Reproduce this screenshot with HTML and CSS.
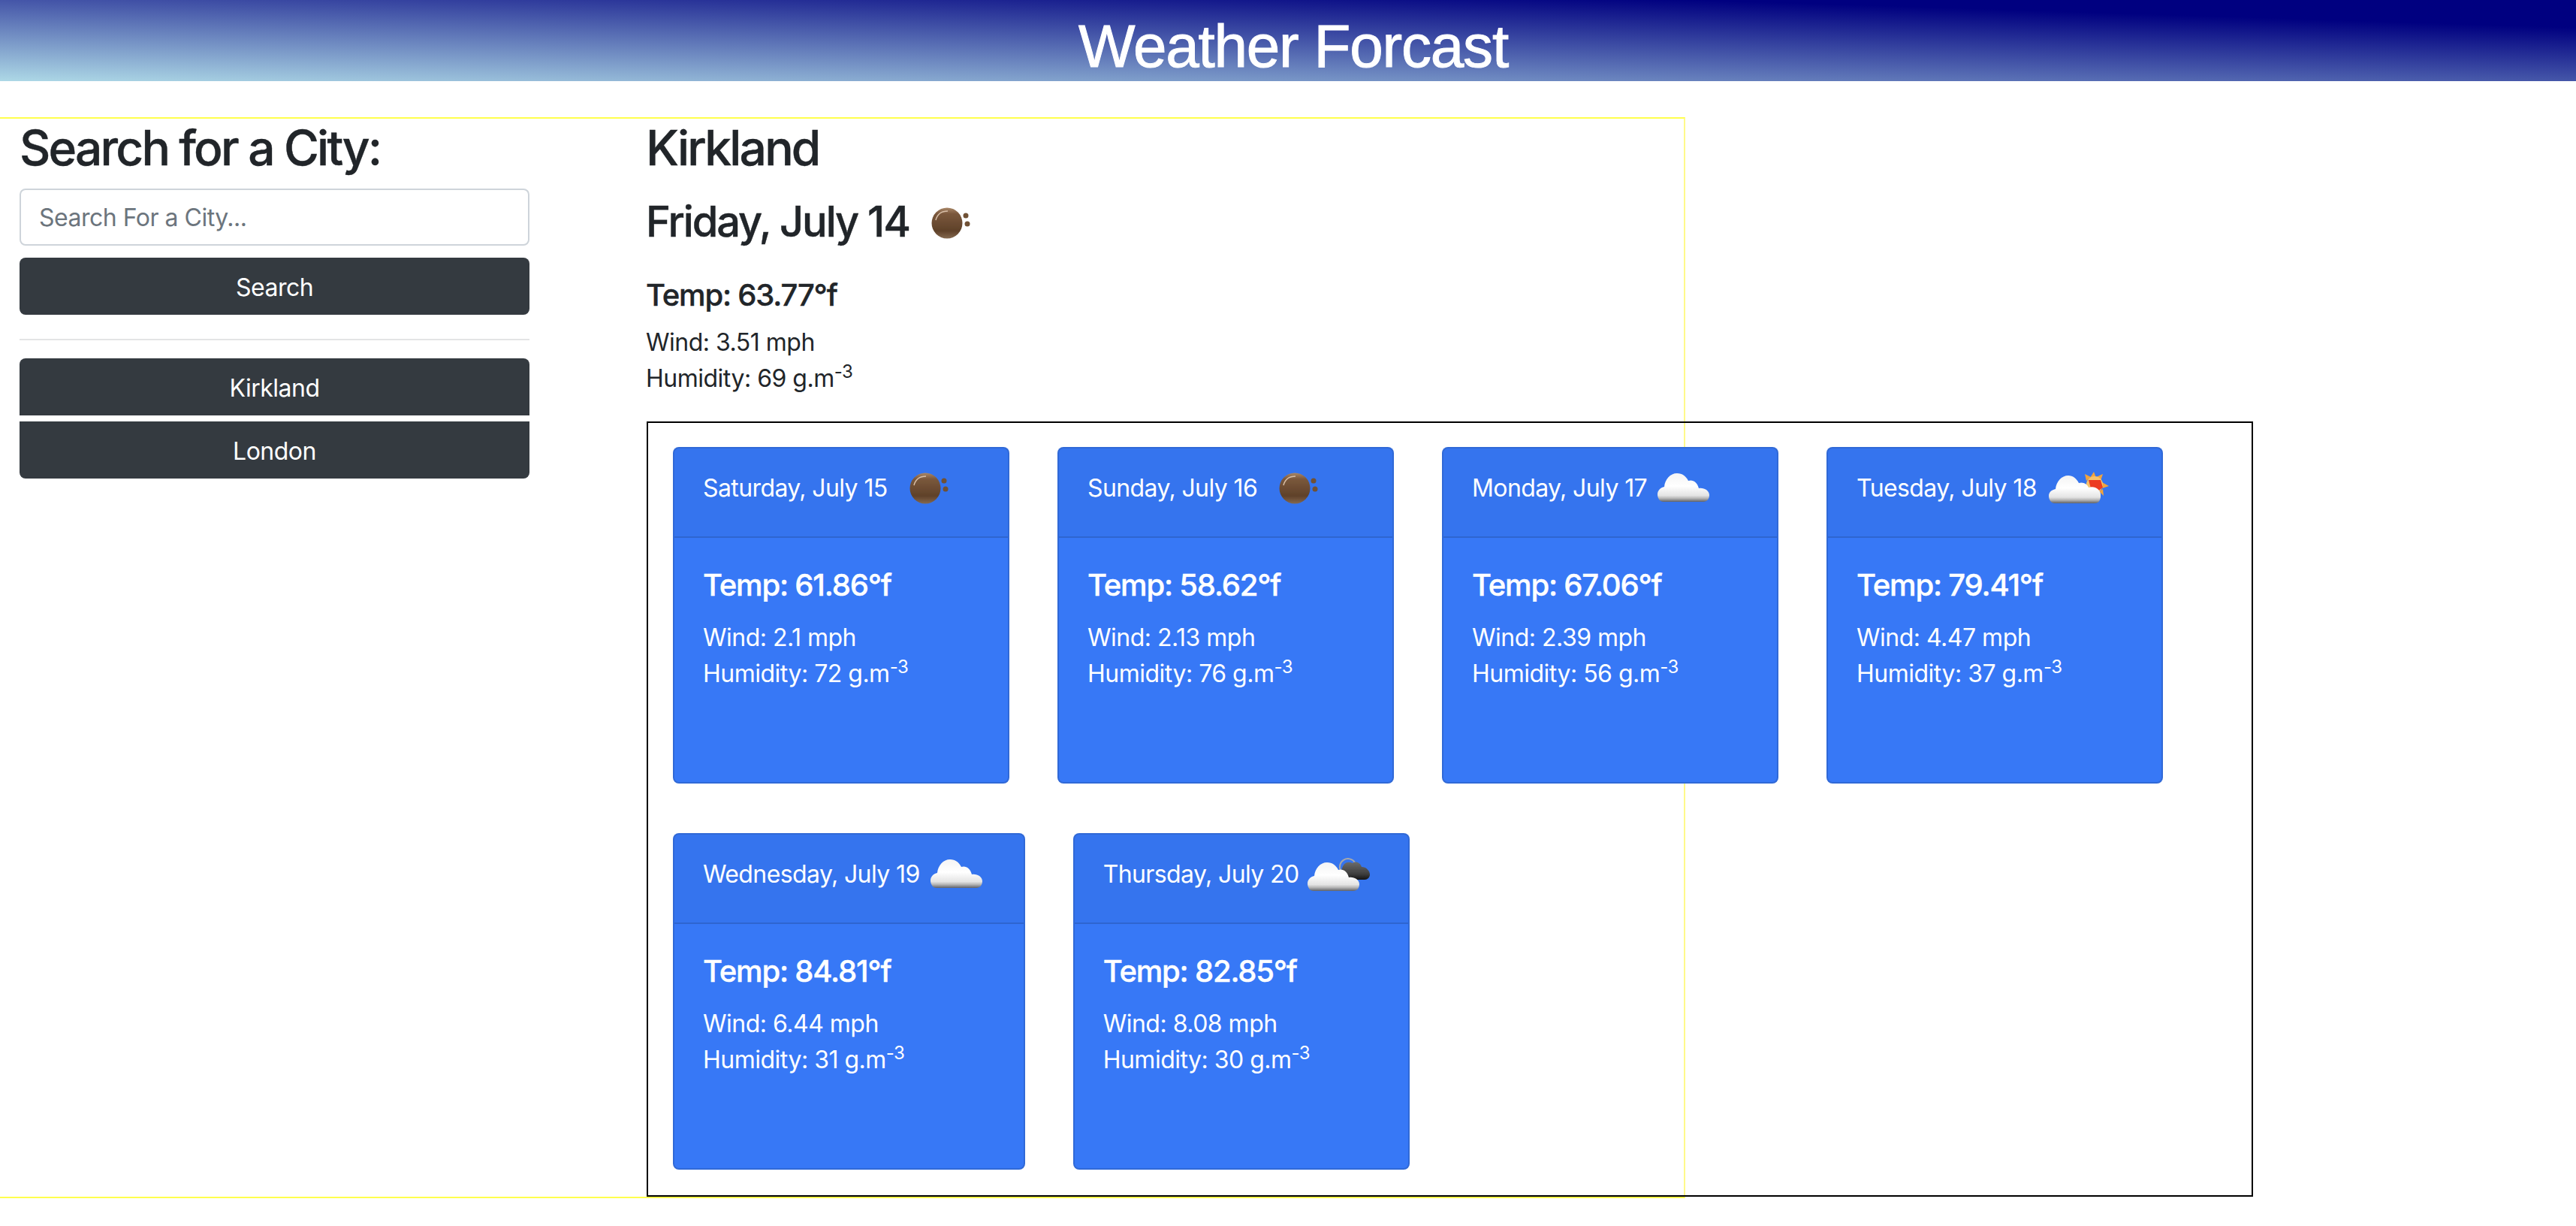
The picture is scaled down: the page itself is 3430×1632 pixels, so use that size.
FILE: index.html
```html
<!DOCTYPE html>
<html lang="en">
<head>
<meta charset="UTF-8">
<meta name="viewport" content="width=device-width, initial-scale=1.0">
<title>Weather Forcast</title>
<link rel="stylesheet" href="styles.css">
</head>
<body>
  <svg class="sprite" aria-hidden="true">
    <defs>
      <linearGradient id="ballFill" x1="0" y1="0" x2="0" y2="1">
        <stop offset="0" stop-color="#a98668"/>
        <stop offset="0.2" stop-color="#7a583c"/>
        <stop offset="0.75" stop-color="#5f4129"/>
        <stop offset="1" stop-color="#84694f"/>
      </linearGradient>
      <linearGradient id="cloudFill" x1="0" y1="0" x2="0" y2="1">
        <stop offset="0" stop-color="#f4f4f4"/>
        <stop offset="0.45" stop-color="#ffffff"/>
        <stop offset="0.78" stop-color="#e4e4e4"/>
        <stop offset="0.88" stop-color="#b5b5b5"/>
        <stop offset="1" stop-color="#5f6268"/>
      </linearGradient>
      <linearGradient id="darkFill" x1="0" y1="0" x2="0" y2="1">
        <stop offset="0" stop-color="#6b6b6b"/>
        <stop offset="0.7" stop-color="#3c3c3c"/>
        <stop offset="1" stop-color="#111111"/>
      </linearGradient>
      <filter id="soft"><feGaussianBlur stdDeviation="0.5"/></filter>
      <path id="cloudShape" d="M8 38C3 38 0 33 0 28C0 23 4 19 9 18C10 8 17 0 26 0C33 0 38 4 41 10C47 8 53 12 55 20C62 19 69 23 69 29C69 34 66 38 61 38Z"/>
      <g id="haze" filter="url(#soft)">
        <circle cx="41" cy="38" r="20.5" fill="url(#ballFill)"/>
        <path d="M26 34C28 26 34 22 42 22" fill="none" stroke="#d8bfa8" stroke-width="1.5"/>
        <circle cx="66" cy="28" r="3.5" fill="#6f5136"/>
        <circle cx="68" cy="39" r="3.5" fill="#6f5136"/>
      </g>
      <g id="scattered" filter="url(#soft)">
        <use href="#cloudShape" x="5" y="18" fill="url(#cloudFill)"/>
      </g>
      <g id="fewClouds" filter="url(#soft)">
        <g fill="#f2a33c">
          <path d="M67 16L70 24L62 24Z"/>
          <path d="M55 19L63 23L57 28Z"/>
          <path d="M79 19L76 28L70 23Z"/>
          <path d="M87 35L78 38L78 30Z"/>
          <path d="M80 48L74 42L79 39Z"/>
        </g>
        <circle cx="68" cy="33" r="11" fill="#f6c26a"/>
        <path d="M60 27L76 27L79 37L68 45L63 38Z" fill="#ec3a24"/>
        <path d="M9 58C4 58 1 53 1 48C1 43 5 40 10 39C11 29 18 21 27 21C33 21 38 25 41 31C47 29 53 33 54 37C62 34 70 40 70 46L70 50C69 55 67 58 62 58Z" transform="translate(6 0)" fill="url(#cloudFill)"/>
      </g>
      <g id="brokenClouds" filter="url(#soft)">
        <path d="M46 33A11 11 0 0 1 65 22" fill="none" stroke="#a9a9a9" stroke-width="2"/>
        <path d="M50 45C45 45 44 38 48 30C50 22 56 20 62 23C66 20 72 22 74 28C80 28 85 33 85 38C85 42 82 45 78 45Z" fill="url(#darkFill)"/>
        <use href="#cloudShape" x="2" y="22" fill="url(#cloudFill)"/>
      </g>
    </defs>
  </svg>

  <header class="site-header">
    <h1>Weather Forcast</h1>
  </header>

  <div class="container">
    <aside class="sidebar">
      <h2>Search for a City:</h2>
      <input class="search-input" type="text" placeholder="Search For a City...">
      <button class="btn" type="button">Search</button>
      <hr>
      <div class="history">
        <button class="btn" type="button">Kirkland</button>
        <button class="btn" type="button">London</button>
      </div>
    </aside>

    <main class="main">
      <h2 class="city">Kirkland</h2>
      <h3 class="today"><span>Friday, July 14</span><svg class="icon" viewBox="0 0 92 72"><use href="#haze"/></svg></h3>
      <h5 class="temp-main">Temp: 63.77°f</h5>
      <p>Wind: 3.51 mph</p>
      <p>Humidity: 69 g.m<sup>-3</sup></p>

      <section class="forecast">
        <div class="card">
          <div class="card-header"><span>Saturday, July 15</span><svg class="icon" viewBox="0 0 92 72"><use href="#haze"/></svg></div>
          <div class="card-body">
            <h5>Temp: 61.86°f</h5>
            <p>Wind: 2.1 mph</p>
            <p>Humidity: 72 g.m<sup>-3</sup></p>
          </div>
        </div>
        <div class="card">
          <div class="card-header"><span>Sunday, July 16</span><svg class="icon" viewBox="0 0 92 72"><use href="#haze"/></svg></div>
          <div class="card-body">
            <h5>Temp: 58.62°f</h5>
            <p>Wind: 2.13 mph</p>
            <p>Humidity: 76 g.m<sup>-3</sup></p>
          </div>
        </div>
        <div class="card">
          <div class="card-header"><span>Monday, July 17</span><svg class="icon" viewBox="0 0 92 72"><use href="#scattered"/></svg></div>
          <div class="card-body">
            <h5>Temp: 67.06°f</h5>
            <p>Wind: 2.39 mph</p>
            <p>Humidity: 56 g.m<sup>-3</sup></p>
          </div>
        </div>
        <div class="card">
          <div class="card-header"><span>Tuesday, July 18</span><svg class="icon" viewBox="0 0 92 72"><use href="#fewClouds"/></svg></div>
          <div class="card-body">
            <h5>Temp: 79.41°f</h5>
            <p>Wind: 4.47 mph</p>
            <p>Humidity: 37 g.m<sup>-3</sup></p>
          </div>
        </div>
        <div class="card">
          <div class="card-header"><span>Wednesday, July 19</span><svg class="icon" viewBox="0 0 92 72"><use href="#scattered"/></svg></div>
          <div class="card-body">
            <h5>Temp: 84.81°f</h5>
            <p>Wind: 6.44 mph</p>
            <p>Humidity: 31 g.m<sup>-3</sup></p>
          </div>
        </div>
        <div class="card">
          <div class="card-header"><span>Thursday, July 20</span><svg class="icon" viewBox="0 0 92 72"><use href="#brokenClouds"/></svg></div>
          <div class="card-body">
            <h5>Temp: 82.85°f</h5>
            <p>Wind: 8.08 mph</p>
            <p>Humidity: 30 g.m<sup>-3</sup></p>
          </div>
        </div>
      </section>
    </main>
  </div>
</body>
</html>
```

FILE: styles.css
```css
* {
  box-sizing: border-box;
}

body {
  margin: 0;
  font-family: Inter, "Noto Sans", sans-serif;
  font-size: 32px;
  line-height: 48px;
  letter-spacing: -0.5px;
  color: #212529;
  background-color: #fff;
}

.sprite {
  display: block;
  width: 0;
  height: 0;
}

.site-header {
  height: 108px;
  padding: 14px 0 0 14px;
  text-align: center;
  color: #fff;
  background: linear-gradient(to top right, lightblue, navy 83%);
}

.site-header h1 {
  margin: 0;
  font-family: "Liberation Sans", Arial, sans-serif;
  font-size: 80px;
  font-weight: 400;
  line-height: 96px;
  letter-spacing: -1.2px;
  -webkit-text-stroke: 1px #fff;
}

.container {
  display: flex;
  width: 2244px;
  margin-top: 48px;
  border-top: 2px solid #ffff4d;
  border-right: 2px solid #fff98a;
  border-bottom: 2px solid #ffff4d;
}

.sidebar {
  flex: none;
  width: 860px;
  padding: 0 155px 0 26px;
}

h2 {
  margin: 0 0 16px;
  font-size: 64px;
  font-weight: 500;
  line-height: 77px;
  letter-spacing: -2.8px;
  -webkit-text-stroke: 0.4px currentColor;
}

.search-input {
  display: block;
  width: 100%;
  height: 76px;
  padding: 12px 24px;
  font: inherit;
  letter-spacing: inherit;
  color: #495057;
  background: #fff;
  border: 2px solid #ced4da;
  border-radius: 8px;
}

.search-input::placeholder {
  color: #6c757d;
  opacity: 1;
}

.btn {
  display: block;
  width: 100%;
  height: 76px;
  margin-top: 16px;
  padding: 14px 24px 10px;
  font: inherit;
  letter-spacing: inherit;
  color: #fff;
  background-color: #343a40;
  border: 0;
  border-radius: 8px;
}

hr {
  height: 2px;
  margin: 32px 0 24px;
  background: #e3e4e5;
  border: 0;
}

.history .btn {
  margin-top: 0;
}

.history .btn:first-child {
  border-radius: 8px 8px 0 0;
}

.history .btn:last-child {
  margin-top: 8px;
  border-radius: 0 0 8px 8px;
}

.main {
  flex: none;
  width: 1380px;
}

.city {
  margin-bottom: 27px;
}

.today {
  display: flex;
  margin: 0 0 38px;
  font-size: 56px;
  font-weight: 500;
  line-height: 67px;
  letter-spacing: -2.1px;
  -webkit-text-stroke: 0.4px currentColor;
}

.today .icon {
  margin: -3px 0 0 9px;
}

h5 {
  margin: 0 0 22px;
  font-size: 40px;
  font-weight: 500;
  line-height: 48px;
  letter-spacing: -1.2px;
  -webkit-text-stroke: 0.4px currentColor;
}

.temp-main {
  margin-bottom: 15px;
}

p {
  margin: 0;
}

sup {
  font-size: 75%;
  line-height: 0;
  vertical-align: baseline;
  position: relative;
  top: -0.5em;
}

.icon {
  flex: none;
  width: 92px;
  height: 72px;
}

.forecast {
  display: flex;
  flex-wrap: wrap;
  align-items: flex-start;
  gap: 66px 64px;
  width: 2139px;
  margin: 33px 0 0 1px;
  padding: 32px 0 34px 33px;
  border: 2px solid #000;
}

.card {
  flex: none;
  min-width: 448px;
  height: 448px;
  color: #fff;
  background-color: #3778f6;
  border: 2px solid rgba(0, 0, 0, 0.125);
  border-radius: 8px;
  background-clip: border-box;
}

.card-header {
  display: flex;
  height: 119px;
  padding: 29px 40px 0 38px;
  letter-spacing: -0.6px;
  background-color: rgba(0, 0, 0, 0.03);
  border-bottom: 2px solid rgba(0, 0, 0, 0.125);
  border-radius: 6px 6px 0 0;
}

.card-header .icon {
  margin: -14px -3px 0 9px;
}

.card-body {
  padding: 39px 40px 0 38px;
}
```
